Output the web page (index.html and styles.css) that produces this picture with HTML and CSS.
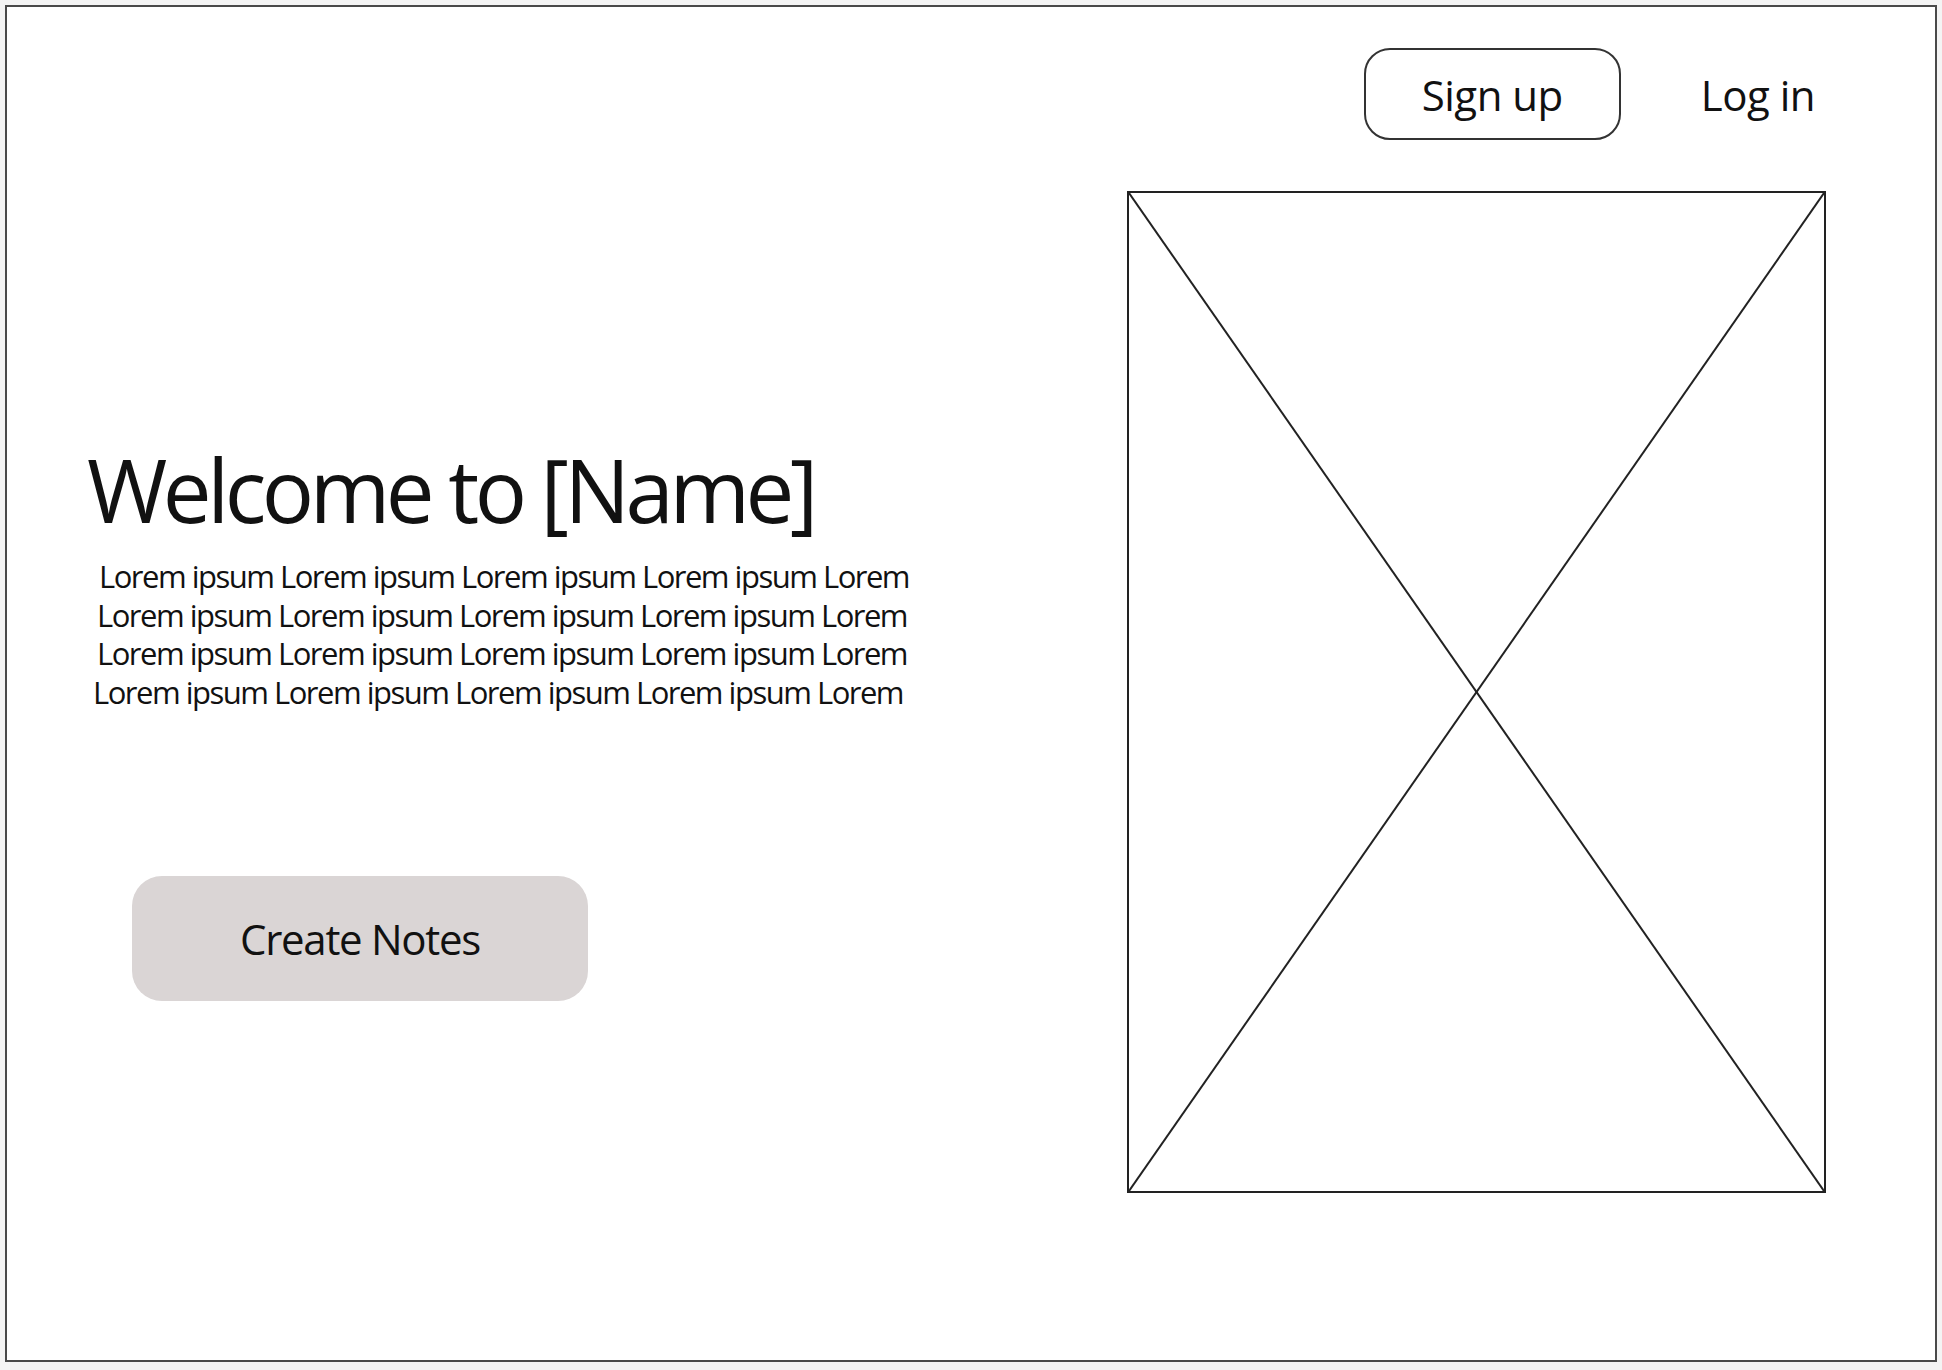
FILE: index.html
```html
<!DOCTYPE html>
<html lang="en">
<head>
<meta charset="utf-8">
<title>Welcome</title>
<link rel="stylesheet" href="styles.css">
</head>
<body>
<div class="frame">
  <header class="topbar">
    <a class="btn-outline" href="#">Sign up</a>
    <a class="link" href="#">Log in</a>
  </header>
  <main class="main">
    <section class="intro">
      <h1 class="title">Welcome to [Name]</h1>
      <p class="lorem"><span class="l1">Lorem ipsum Lorem ipsum Lorem ipsum Lorem ipsum Lorem</span><span class="l2">Lorem ipsum Lorem ipsum Lorem ipsum Lorem ipsum Lorem</span><span class="l3">Lorem ipsum Lorem ipsum Lorem ipsum Lorem ipsum Lorem</span><span class="l4">Lorem ipsum Lorem ipsum Lorem ipsum Lorem ipsum Lorem</span></p>
      <a class="btn-fill" href="#">Create Notes</a>
    </section>
    <div class="placeholder">
      <svg class="cross" viewBox="0 0 100 100" preserveAspectRatio="none">
        <line x1="0" y1="0" x2="100" y2="100" vector-effect="non-scaling-stroke"/>
        <line x1="100" y1="0" x2="0" y2="100" vector-effect="non-scaling-stroke"/>
      </svg>
    </div>
  </main>
</div>
</body>
</html>
```
FILE: styles.css
```css
html, body {
  margin: 0;
  padding: 0;
  background: #f4f4f4;
}
body {
  font-family: "Open Sans", "Noto Sans", sans-serif;
  color: #111;
}
.frame {
  box-sizing: border-box;
  width: 1932px;
  height: 1357px;
  margin: 5px;
  border: 2px solid #4a4a4a;
  background: #fff;
  display: flex;
  flex-direction: column;
}
.topbar {
  display: flex;
  justify-content: flex-end;
  align-items: center;
  gap: 80px;
  padding: 41px 120px 0 0;
}
.btn-outline {
  box-sizing: border-box;
  width: 257px;
  height: 92px;
  border: 2px solid #333;
  border-radius: 26px;
  display: flex;
  align-items: center;
  justify-content: center;
  font-size: 42px;
  letter-spacing: -0.5px;
  color: #111;
  text-decoration: none;
}
.link {
  font-size: 42px;
  letter-spacing: -0.5px;
  color: #111;
  text-decoration: none;
}
.main {
  flex: 1;
  display: flex;
  justify-content: space-between;
  align-items: flex-start;
  padding: 51px 109px 0 80px;
}
.intro {
  display: flex;
  flex-direction: column;
  align-items: flex-start;
  padding-top: 248px;
}
.title {
  margin: 0;
  font-weight: 400;
  font-size: 87px;
  line-height: 100px;
  letter-spacing: -4.5px;
  white-space: nowrap;
}
.lorem {
  margin: 18px 0 0 0;
  font-size: 31px;
  line-height: 38.5px;
  letter-spacing: -1.5px;
  white-space: nowrap;
}
.lorem span { display: block; }
.l1 { padding-left: 12px; }
.l2 { padding-left: 10px; }
.l3 { padding-left: 10px; }
.l4 { padding-left: 6px; }
.btn-fill {
  margin: 165px 0 0 45px;
  width: 456px;
  height: 125px;
  border-radius: 30px;
  background: #dad5d5;
  display: flex;
  align-items: center;
  justify-content: center;
  font-size: 42px;
  letter-spacing: -1.3px;
  color: #111;
  text-decoration: none;
}
.placeholder {
  box-sizing: border-box;
  width: 699px;
  height: 1002px;
  border: 2px solid #222;
}
.cross {
  display: block;
  width: 100%;
  height: 100%;
}
.cross line {
  stroke: #222;
  stroke-width: 2;
}
```
